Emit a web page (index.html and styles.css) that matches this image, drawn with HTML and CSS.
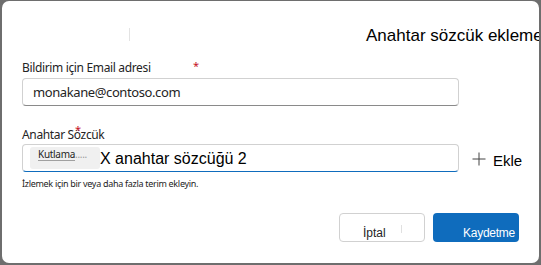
FILE: index.html
```html
<!DOCTYPE html>
<html lang="tr">
<head>
<meta charset="utf-8">
<title>Anahtar sözcük ekleme</title>
<link rel="stylesheet" href="styles.css">
</head>
<body>
<div class="dialog">
  <div class="header">
    <span class="caret"></span>
    <h1 class="title">Anahtar sözcük ekleme</h1>
  </div>
  <div class="field">
    <label class="label">Bildirim için Email adresi<span class="req req-email">*</span></label>
    <div class="input input-email">monakane@contoso.com</div>
  </div>
  <div class="field field-kw">
    <label class="label">Anahtar Sözcük<span class="req req-kw">*</span></label>
    <div class="row">
      <div class="input input-kw">
        <span class="chip"><span class="chip-text">Kutlama</span><span class="chip-more">.....</span></span>
        <span class="kw-text">X anahtar sözcüğü 2</span>
      </div>
      <button class="add" type="button">
        <svg class="plus" width="14" height="14" viewBox="0 0 14 14"><path d="M7 0.5V13.5M0.5 7H13.5" stroke="#424242" stroke-width="1" fill="none"/></svg>
        <span class="add-text">Ekle</span>
      </button>
    </div>
    <div class="hint">İzlemek için bir veya daha fazla terim ekleyin.</div>
  </div>
  <div class="actions">
    <button class="btn btn-cancel" type="button">İptal<span class="btn-caret"></span></button>
    <button class="btn btn-primary" type="button">Kaydetme</button>
  </div>
</div>
</body>
</html>
```

FILE: styles.css
```css
html, body {
  margin: 0;
  padding: 0;
}
body {
  width: 541px;
  height: 265px;
  background: #6e6e6e;
  overflow: hidden;
  padding: 1px 0 0 2px;
  box-sizing: border-box;
}
.dialog {
  width: 537px;
  height: 262px;
  background: #ffffff;
  border-radius: 7px;
  overflow: hidden;
  box-sizing: border-box;
  padding: 25px 20px 0 20px;
  font-family: "Noto Sans", "Open Sans", sans-serif;
  color: #242424;
}
.header {
  display: flex;
  align-items: flex-start;
  height: 20px;
  white-space: nowrap;
}
.caret {
  flex: none;
  width: 1px;
  height: 13px;
  margin: 2px 0 0 107px;
  background: #e3e3e3;
}
.title {
  flex: none;
  margin: 0 0 0 236px;
  font-family: "Liberation Sans", Arial, sans-serif;
  font-weight: 400;
  font-size: 17px;
  line-height: 20px;
  color: #000000;
}
.field {
  margin-top: 14px;
}
.field-kw {
  margin-top: 21px;
}
.label {
  display: block;
  position: relative;
  font-size: 12px;
  line-height: 16px;
  letter-spacing: -0.35px;
  color: #242424;
}
.req {
  position: absolute;
  color: #c50f1f;
  font-size: 11px;
  line-height: 11px;
}
.req-email {
  left: 171px;
  top: 0;
}
.req-kw {
  left: 53px;
  top: -3px;
}
.input {
  box-sizing: border-box;
  width: 437px;
  height: 28px;
  margin-top: 2px;
  border: 1px solid #d1d1d1;
  border-bottom-color: #8a8a8a;
  border-radius: 4px;
  display: flex;
  align-items: center;
}
.input-email {
  padding-left: 10px;
  font-size: 13px;
  letter-spacing: -0.4px;
  color: #242424;
}
.row {
  display: flex;
  align-items: flex-start;
}
.input-kw {
  margin-top: 1px;
  padding-left: 7px;
  border-bottom: 1.5px solid #0f6cbd;
  flex: none;
}
.chip {
  flex: none;
  box-sizing: border-box;
  width: 70px;
  height: 22px;
  padding: 1px 0 0 8px;
  background: #f0f0f0;
  border-radius: 3px;
  display: flex;
  align-items: flex-start;
  white-space: nowrap;
  overflow: hidden;
  font-size: 10px;
  line-height: 12px;
  letter-spacing: -0.3px;
}
.chip-text {
  color: #242424;
  text-decoration: underline;
  text-decoration-color: #a0a0a0;
  text-underline-offset: 2px;
}
.chip-more {
  color: #9a9a9a;
}
.kw-text {
  flex: none;
  font-family: "Liberation Sans", Arial, sans-serif;
  font-size: 16px;
  line-height: 18px;
  padding-top: 1px;
  color: #000000;
  white-space: nowrap;
}
.add {
  display: flex;
  align-items: flex-start;
  margin: 9px 0 0 13px;
  padding: 0;
  border: 0;
  background: transparent;
  font-family: "Liberation Sans", Arial, sans-serif;
  font-size: 15px;
  line-height: 18px;
  color: #000000;
}
.plus {
  flex: none;
  display: block;
}
.add-text {
  margin-left: 7px;
}
.hint {
  margin-top: 6px;
  font-size: 9px;
  line-height: 12px;
  letter-spacing: -0.3px;
  color: #242424;
}
.actions {
  display: flex;
  justify-content: flex-end;
  gap: 8px;
  margin-top: 23px;
}
.btn {
  box-sizing: border-box;
  width: 86px;
  height: 29px;
  border-radius: 4px;
  margin: 0;
  display: flex;
  align-items: flex-end;
  padding: 0 0 2px 0;
  font-family: "Liberation Sans", Arial, sans-serif;
  font-size: 12px;
  line-height: 14px;
  text-align: left;
  white-space: nowrap;
}
.btn-cancel {
  background: #ffffff;
  border: 1px solid #d1d1d1;
  color: #242424;
  padding-left: 23px;
  padding-bottom: 1px;
}
.btn-caret {
  align-self: flex-start;
  width: 1px;
  height: 8px;
  margin: 11px 0 0 15px;
  background: #e0e0e0;
}
.btn-primary {
  background: #0f6cbd;
  border: 0;
  color: #ffffff;
  padding-left: 30px;
  letter-spacing: -0.25px;
}
```
